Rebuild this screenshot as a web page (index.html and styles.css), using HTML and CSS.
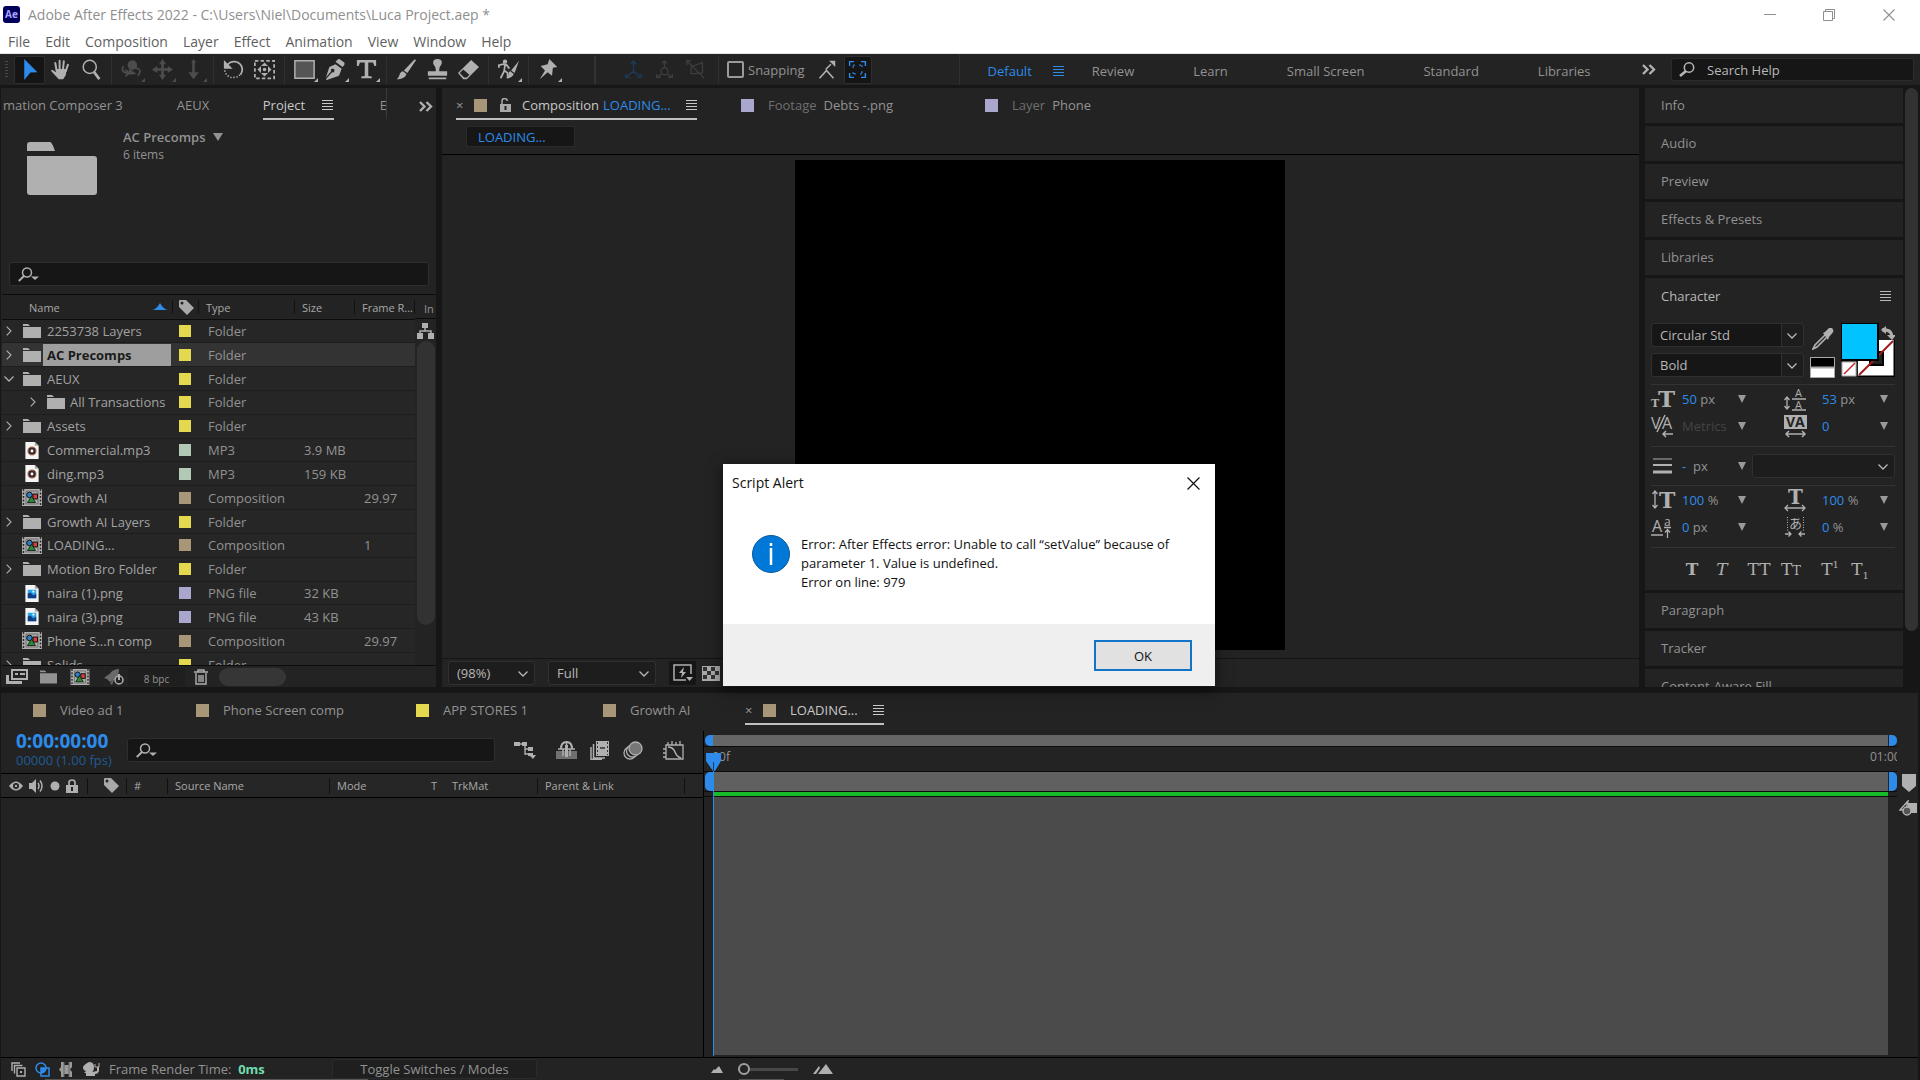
FILE: index.html
```
<!DOCTYPE html>
<html lang="en">
<head>
    <meta charset="UTF-8">
    <meta name="viewport" content="width=device-width, initial-scale=1.0">
    <title>Adobe After Effects 2022</title>
    <link rel="stylesheet" href="styles.css">
</head>
<body>
    <!-- Shared icons -->
    <svg class="sprite" aria-hidden="true">
        <symbol id="i-menu" viewBox="0 0 11 12"><path d="M0 1.500h11M0 4.500h11M0 7.500h11M0 10.500h11" stroke="currentColor"/></symbol>
        <symbol id="i-more" viewBox="0 0 14 11"><path d="M1 1l4.500 4.500L1 10M7.500 1L12 5.500 7.500 10" fill="none" stroke="currentColor" stroke-width="2.400"/></symbol>
        <symbol id="i-chevron" viewBox="0 0 10 6"><path d="M.5.500L5 5 9.500.500" fill="none" stroke="currentColor" stroke-width="1.300"/></symbol>
        <symbol id="i-right" viewBox="0 0 6 10"><path d="M.7.700L5 5 .7 9.300" fill="none" stroke="currentColor" stroke-width="1.100"/></symbol>
        <symbol id="i-down" viewBox="0 0 8 8"><path d="M0 0h8L4 8z" fill="currentColor"/></symbol>
        <symbol id="i-find" viewBox="0 0 22 15"><circle cx="9" cy="5.500" r="4.500" fill="none" stroke="currentColor" stroke-width="1.500"/><path d="M6 9L.8 14" stroke="currentColor" stroke-width="1.900"/><path d="M13 9.500h8L17 13z" fill="currentColor"/></symbol>
        <symbol id="i-find-plain" viewBox="0 0 16 15"><circle cx="10" cy="5.500" r="4.700" fill="none" stroke="currentColor" stroke-width="1.500"/><path d="M7 9L1 14" stroke="currentColor" stroke-width="2.500"/></symbol>
        <symbol id="i-folder" viewBox="0 0 18 14"><path d="M0 0h5l2 2H0zM0 3h18v11H0z" fill="currentColor"/></symbol>
        <symbol id="i-tag" viewBox="0 0 15 15"><path fill-rule="evenodd" d="M0 1Q0 0 1 0h6l8 8-7 7-8-8zM3 1.500a1.500 1.500 0 100 3 1.500 1.500 0 000-3z" fill="currentColor"/></symbol>
        <symbol id="i-comp" viewBox="0 0 20 17"><path d="M0 0h20v17H0z" fill="#b0b0b0"/><path d="M1.500 0v17M18.500 0v17" stroke="#2a2a2a" stroke-width="1.500" stroke-dasharray="2 1.500"/><path d="M4 2h12v13H4z" fill="#aaa" stroke="#555" stroke-width=".7"/><circle cx="7.500" cy="6" r="2.800" fill="#2c80c8" stroke="#111"/><path d="M11 5h4.500v5H11z" fill="#d64038" stroke="#111"/><path d="M9.500 7l4 6.500h-8z" fill="#278b35" stroke="#111" stroke-width=".8"/></symbol>
        <symbol id="i-mp3" viewBox="0 0 14 18"><path d="M0 0h10l4 4v14H0z" fill="#f5f5f5"/><path d="M10 0v4h4z" fill="#aaa"/><circle cx="7" cy="9.500" r="4.300" fill="#3a2b33" stroke="#c07857"/><circle cx="7" cy="9.500" r="1.500" fill="#fff"/></symbol>
        <symbol id="i-png" viewBox="0 0 14 18"><path d="M0 0h10l4 4v14H0z" fill="#f5f5f5"/><path d="M10 0v4h4z" fill="#aaa"/><path d="M2.500 5h9v9h-9z" fill="#2aa6e8"/><path d="M2.500 14V9l3-1 3 3 3-2v5z" fill="#103f86"/><circle cx="8.500" cy="7" r="1.200" fill="#fff"/></symbol>
        <symbol id="i-close" viewBox="0 0 12 12"><path d="M.5.500l11 11M11.500.500l-11 11" stroke="currentColor" stroke-width="1.100"/></symbol>
    </svg>

    <header class="titlebar">
        <span class="app-logo">Ae</span>
        <span class="app-title">Adobe After Effects 2022 - C:\Users\Niel\Documents\Luca Project.aep *</span>
        <div class="window-controls">
            <button aria-label="Minimize"><svg width="12" height="12"><path d="M0 5.500h12" stroke="currentColor"/></svg></button>
            <button aria-label="Restore"><svg width="12" height="12"><path d="M.5 2.500h9v9h-9zM2.500 2.500v-2h9v9h-2" fill="none" stroke="currentColor"/></svg></button>
            <button aria-label="Close"><svg width="12" height="12"><use href="#i-close"/></svg></button>
        </div>
    </header>

    <nav class="menubar">
        <a href="#">File</a><a href="#">Edit</a><a href="#">Composition</a><a href="#">Layer</a><a href="#">Effect</a><a href="#">Animation</a><a href="#">View</a><a href="#">Window</a><a href="#">Help</a>
    </nav>

    <div class="toolbar">
        <span class="grip"></span>
        <div class="tools">
            <button class="tool active" aria-label="Selection"><svg viewBox="0 0 24 24"><path d="M6 0l15 15-8 .5L6 24z" fill="currentColor"/></svg></button>
            <button class="tool" aria-label="Hand"><svg viewBox="0 0 24 24"><path d="M7.500 13L6 4.500M11 12V2M14.800 12l1-9.500M18 14l2.500-7.500" stroke="currentColor" stroke-width="2.300" stroke-linecap="round"/><path d="M6.500 11.500h12.500l-1 7-3 4.500h-5L1.500 14q-.5-2 1.500-1.500L7 15z" fill="currentColor"/></svg></button>
            <button class="tool" aria-label="Zoom"><svg viewBox="0 0 24 24"><circle cx="10" cy="9" r="7.500" fill="none" stroke="currentColor" stroke-width="1.700"/><path d="M15 15l6 8" stroke="currentColor" stroke-width="3"/></svg></button>
        </div>
        <div class="tools off">
            <button class="tool more" aria-label="Orbit camera"><svg viewBox="0 0 24 24"><path d="M8 16c-6 0-8-4-5-8M5 20l4-4-4-4M19 19c5-4 2-9-2-8" fill="none" stroke="currentColor" stroke-width="2"/><circle cx="13" cy="7" r="5.500" fill="currentColor"/><path d="M9 11l9 6-9 1z" fill="currentColor"/></svg></button>
            <button class="tool more" aria-label="Pan camera"><svg viewBox="0 0 24 24"><path d="M12 4v16M4 12h16" stroke="currentColor" stroke-width="3"/><path d="M12 0l4 6H8zM12 24l4-6H8zM0 12l6-4v8zM24 12l-6-4v8z" fill="currentColor"/></svg></button>
            <button class="tool more" aria-label="Dolly camera"><svg viewBox="0 0 24 24"><path d="M12 3v13" stroke="currentColor" stroke-width="3"/><path d="M12 23l6-8H6zM12 0l3 4H9z" fill="currentColor"/></svg></button>
        </div>
        <div class="tools">
            <button class="tool" aria-label="Rotation"><svg viewBox="0 0 24 24"><path d="M5 7c4-6 13-5 16 1 2 4 1 7-1 10" fill="none" stroke="currentColor" stroke-width="2"/><path d="M1 1v10h10z" fill="currentColor"/><path d="M2 13c1 6 6 9 11 8 3 0 5-1 7-4" fill="none" stroke="currentColor" stroke-width="1.800" stroke-dasharray="1.500 2"/></svg></button>
            <button class="tool" aria-label="Anchor point"><svg viewBox="0 0 24 24"><path d="M1 2h22v20H1z" fill="none" stroke="currentColor" stroke-width="2" stroke-dasharray="4 2.500"/><circle cx="12" cy="12" r="2" fill="currentColor"/><path d="M12 4l4 4H8zM12 20l4-4H8zM4 12l4-4v8zM20 12l-4-4v8z" fill="currentColor"/></svg></button>
        </div>
        <div class="tools">
            <button class="tool more" aria-label="Rectangle"><svg viewBox="0 0 24 24"><path d="M1 2h22v20H1z" fill="#555" stroke="currentColor" stroke-width="1.700"/></svg></button>
            <button class="tool more" aria-label="Pen"><svg viewBox="0 0 24 24"><path fill-rule="evenodd" d="M12 6l7 5-3 8-14 5L1 23l7-8a2 2 0 10-1-1l-6 7L5 9z" fill="currentColor"/><path d="M14 1q2-2 4 0l4 3q1 2-1 4l-1 1-8-6z" fill="currentColor"/></svg></button>
            <button class="tool more" aria-label="Type"><svg viewBox="0 0 24 24"><path d="M1 1h22v7h-2L19.500 4H14v15.500l4 .5v2H6v-2l4-.5V4H4.500L3 8H1z" fill="currentColor"/></svg></button>
        </div>
        <div class="tools">
            <button class="tool" aria-label="Brush"><svg viewBox="0 0 24 24"><path d="M23 1q-1-1-2.500 0L9 13l4 3zM8 14l4 3c-1 4-6 6-11 6 4-3 2-8 7-9z" fill="currentColor"/></svg></button>
            <button class="tool" aria-label="Clone stamp"><svg viewBox="0 0 24 24"><path d="M12 0c5 0 6 4 4 7-2 2-2 4-2 7h9v5H1v-5h9c0-3 0-5-2-7-2-3-1-7 4-7zM2 21h20v2H2z" fill="currentColor"/></svg></button>
            <button class="tool" aria-label="Eraser"><svg viewBox="0 0 24 24"><path d="M15 1l9 8-14 14H6l-6-7z" fill="currentColor"/><path d="M6 12l7 6-3 3H7l-5-5z" fill="#232323"/></svg></button>
        </div>
        <div class="tools">
            <button class="tool more" aria-label="Roto brush"><svg viewBox="0 0 24 24"><circle cx="8" cy="3" r="2.500" fill="currentColor"/><path d="M1 10V7l5-1 4 1 3 4M8 7l-1 7-4 8M7 13l4 3v6" fill="none" stroke="currentColor" stroke-width="2"/><path d="M24 2L15 13l4 3zM14 14l4 3c-1 3-4 5-8 5 3-2 1-7 4-8z" fill="currentColor"/></svg></button>
        </div>
        <div class="tools">
            <button class="tool more" aria-label="Puppet pin"><svg viewBox="0 0 24 24"><path d="M13 0l9 9-5 1-1 9-5-4-9 8 6-10-5-5 8-2z" fill="currentColor"/></svg></button>
        </div>
        <div class="axis-tools">
            <button class="tool axis-on" aria-label="Local axis"><svg viewBox="0 0 24 24"><path d="M12 3v11L3 21M12 14l9 7M9 6l3-4 3 4M3 17v4h5M21 17v4h-5" fill="none" stroke="currentColor" stroke-width="1.500"/></svg></button>
            <button class="tool" aria-label="World axis"><svg viewBox="0 0 24 24"><circle cx="12" cy="14" r="4" fill="none" stroke="currentColor" stroke-width="1.500"/><path d="M12 10V2M9 17l-6 4M15 17l6 4M9 5l3-3 3 3M3 17v4h5M21 17v4h-5" fill="none" stroke="currentColor" stroke-width="1.500"/></svg></button>
            <button class="tool" aria-label="View axis"><svg viewBox="0 0 24 24"><path d="M7 9l13-5v12L7 17zM2 2l20 20M2 7V2h5" fill="none" stroke="currentColor" stroke-width="1.500"/></svg></button>
        </div>
        <label class="snapping"><input type="checkbox">Snapping</label>
        <button class="tool snap-opt" aria-label="Snap to edges"><svg viewBox="0 0 24 24"><path d="M4 22l8-9 8 9M11 12l6-6" fill="none" stroke="currentColor" stroke-width="1.800"/><path d="M15 2h7v7z" fill="currentColor"/></svg></button>
        <button class="tool snap-opt active" aria-label="Snap to features"><svg viewBox="0 0 24 24"><path d="M3 8V3h5M16 3h5v5M21 16v5h-5M8 21H3v-5" fill="none" stroke="currentColor" stroke-width="1.600"/><path d="M7 10V7h3M14 7h3v3M17 14v3h-3M10 17H7v-3" fill="none" stroke="currentColor" stroke-width="1.500" stroke-dasharray="2 1"/></svg></button>
        <nav class="workspaces">
            <a href="#" class="current">Default <svg width="11" height="12"><use href="#i-menu"/></svg></a>
            <a href="#">Review</a>
            <a href="#">Learn</a>
            <a href="#">Small Screen</a>
            <a href="#">Standard</a>
            <a href="#">Libraries</a>
        </nav>
        <button class="overflow" aria-label="More workspaces"><svg width="14" height="11"><use href="#i-more"/></svg></button>
        <label class="help-search"><svg width="16" height="15"><use href="#i-find-plain"/></svg><input type="text" placeholder="Search Help" aria-label="Search Help"></label>
    </div>

    <main class="panels">
        <section class="panel project">
            <div class="tabs">
                <a href="#">mation Composer 3</a>
                <a href="#" class="aeux">AEUX</a>
                <a href="#" class="active">Project <svg width="11" height="12"><use href="#i-menu"/></svg></a>
                <a href="#" class="cut">E</a>
                <button class="overflow" aria-label="More panels"><svg width="14" height="11"><use href="#i-more"/></svg></button>
            </div>
            <div class="item-info">
                <svg class="big-folder" width="70" height="53" viewBox="0 0 70 53"><path d="M0 3q0-3 3-3h20q2 0 5 9H0zM0 14h67q3 0 3 3v33q0 3-3 3H3q-3 0-3-3z" fill="#b0b0b0"/></svg>
                <div>
                    <strong>AC Precomps <svg width="10" height="8" viewBox="0 0 8 8" preserveAspectRatio="none"><use href="#i-down"/></svg></strong>
                    <p>6 items</p>
                </div>
            </div>
            <label class="search"><svg width="22" height="15"><use href="#i-find"/></svg><input type="text" aria-label="Search project"></label>
            <div class="list">
                <table>
                    <thead>
                        <tr><th class="c-name">Name <svg width="16" height="7"><path d="M0 7q4 0 8-7 4 7 8 7z" fill="#2d8ceb"/></svg></th><th class="c-label"><svg width="15" height="15"><use href="#i-tag"/></svg></th><th class="c-type">Type</th><th class="c-size">Size</th><th class="c-rate">Frame R...</th></tr>
                    </thead>
                    <tbody>
                        <tr><td><div class="item"><svg class="twist"><use href="#i-right"/></svg><svg class="kind"><use href="#i-folder"/></svg>2253738 Layers</div></td><td><i class="label yellow"></i></td><td>Folder</td><td></td><td></td></tr>
                        <tr class="selected"><td><div class="item"><svg class="twist"><use href="#i-right"/></svg><svg class="kind"><use href="#i-folder"/></svg><b>AC Precomps</b></div></td><td><i class="label yellow"></i></td><td>Folder</td><td></td><td></td></tr>
                        <tr><td><div class="item"><svg class="twist"><use href="#i-chevron"/></svg><svg class="kind"><use href="#i-folder"/></svg>AEUX</div></td><td><i class="label yellow"></i></td><td>Folder</td><td></td><td></td></tr>
                        <tr><td><div class="item nested"><svg class="twist"><use href="#i-right"/></svg><svg class="kind"><use href="#i-folder"/></svg>All Transactions</div></td><td><i class="label yellow"></i></td><td>Folder</td><td></td><td></td></tr>
                        <tr><td><div class="item"><svg class="twist"><use href="#i-right"/></svg><svg class="kind"><use href="#i-folder"/></svg>Assets</div></td><td><i class="label yellow"></i></td><td>Folder</td><td></td><td></td></tr>
                        <tr><td><div class="item file"><svg class="kind"><use href="#i-mp3"/></svg>Commercial.mp3</div></td><td><i class="label mint"></i></td><td>MP3</td><td>3.9 MB</td><td></td></tr>
                        <tr><td><div class="item file"><svg class="kind"><use href="#i-mp3"/></svg>ding.mp3</div></td><td><i class="label mint"></i></td><td>MP3</td><td>159 KB</td><td></td></tr>
                        <tr><td><div class="item file"><svg class="kind"><use href="#i-comp"/></svg>Growth AI</div></td><td><i class="label sand"></i></td><td>Composition</td><td></td><td>29.97</td></tr>
                        <tr><td><div class="item"><svg class="twist"><use href="#i-right"/></svg><svg class="kind"><use href="#i-folder"/></svg>Growth AI Layers</div></td><td><i class="label yellow"></i></td><td>Folder</td><td></td><td></td></tr>
                        <tr><td><div class="item file"><svg class="kind"><use href="#i-comp"/></svg>LOADING...</div></td><td><i class="label sand"></i></td><td>Composition</td><td></td><td>1</td></tr>
                        <tr><td><div class="item"><svg class="twist"><use href="#i-right"/></svg><svg class="kind"><use href="#i-folder"/></svg>Motion Bro Folder</div></td><td><i class="label yellow"></i></td><td>Folder</td><td></td><td></td></tr>
                        <tr><td><div class="item file"><svg class="kind"><use href="#i-png"/></svg>naira (1).png</div></td><td><i class="label lavender"></i></td><td>PNG file</td><td>32 KB</td><td></td></tr>
                        <tr><td><div class="item file"><svg class="kind"><use href="#i-png"/></svg>naira (3).png</div></td><td><i class="label lavender"></i></td><td>PNG file</td><td>43 KB</td><td></td></tr>
                        <tr><td><div class="item file"><svg class="kind"><use href="#i-comp"/></svg>Phone S...n comp</div></td><td><i class="label sand"></i></td><td>Composition</td><td></td><td>29.97</td></tr>
                        <tr><td><div class="item"><svg class="twist"><use href="#i-right"/></svg><svg class="kind"><use href="#i-folder"/></svg>Solids</div></td><td><i class="label yellow"></i></td><td>Folder</td><td></td><td></td></tr>
                    </tbody>
                </table>
                <div class="list-side">
                    <span class="side-head">In</span>
                    <svg width="17" height="16" viewBox="0 0 17 16"><path d="M5 0h6v5H5zM0 10h6v6H0zM11 10h6v6h-6z" fill="#b0b0b0"/><path d="M8 5v3M3 11V8h11v3" fill="none" stroke="#b0b0b0" stroke-width="1.500"/></svg>
                    <div class="scrollbar"></div>
                </div>
            </div>
            <div class="project-foot">
                <svg width="22" height="15" viewBox="0 0 22 15"><path d="M6 1h15v9H6z" fill="none" stroke="#b0b0b0" stroke-width="2"/><path d="M9 5h3M14 5h5" stroke="#b0b0b0" stroke-width="2"/><path d="M0 6h3v6h13v3H0z" fill="#b0b0b0"/></svg>
                <svg width="17" height="14"><use href="#i-folder"/></svg>
                <svg width="22" height="16"><use href="#i-comp"/></svg>
                <svg width="22" height="16" viewBox="0 0 22 16"><path d="M16 0C10 0 6 4 4 10l3 3c6-2 9-7 9-13zM1 9l5-4-2 5zM7 14l4-3-2 5z" fill="#6a6a6a"/><circle cx="16" cy="11" r="4" fill="#232323" stroke="#b0b0b0" stroke-width="1.500"/><path d="M16 5v6" stroke="#b0b0b0" stroke-width="2"/></svg>
                <button class="bpc">8 bpc</button>
                <svg width="14" height="16" viewBox="0 0 14 16"><path d="M0 3h14M4 3V1h6v2M2 4v11h10V4M5 6v7M7 6v7M9 6v7" fill="none" stroke="#b0b0b0" stroke-width="1.400"/></svg>
                <div class="h-scroll"></div>
            </div>
        </section>

        <section class="panel viewer">
            <div class="tabs">
                <a href="#" class="active comp-tab"><span class="x">×</span><i class="swatch sand"></i><svg class="lock" width="11" height="14" viewBox="0 0 11 14"><path d="M2 6V3q0-2.500 2.500-2.500T7.500 3" fill="none" stroke="#aaa" stroke-width="1.500"/><path d="M0 6h11v8H0z" fill="#aaa"/><path d="M5.500 8v4" stroke="#232323" stroke-width="2"/></svg>Composition <em>LOADING...</em><svg width="11" height="12"><use href="#i-menu"/></svg></a>
                <a href="#" class="footage-tab"><i class="swatch lavender"></i><span>Footage</span> Debts -.png</a>
                <a href="#" class="layer-tab"><i class="swatch lavender"></i><span>Layer</span> Phone</a>
            </div>
            <div class="crumbs"><button>LOADING...</button></div>
            <div class="stage"><div class="canvas"></div></div>
            <div class="viewer-foot">
                <div class="select zoom-select"><select aria-label="Magnification"><option>(98%)</option></select><svg width="10" height="6"><use href="#i-chevron"/></svg></div>
                <div class="select res-select"><select aria-label="Resolution"><option>Full</option></select><svg width="10" height="6"><use href="#i-chevron"/></svg></div>
                <button class="fast" aria-label="Fast previews"><svg width="20" height="18" viewBox="0 0 20 18"><path d="M18 10V1H1v15h12" fill="none" stroke="#b0b0b0" stroke-width="1.500"/><path d="M11 3L6 9h3l-1 5 5-6h-3zM13 13h7l-3.500 4z" fill="#b0b0b0"/></svg></button>
                <svg width="18" height="15" viewBox="0 0 18 15"><path d="M0 0h18v15H0z" fill="#aaa"/><path d="M1 3h16M1 11h16" stroke="#333" stroke-width="4" stroke-dasharray="4 4"/><path d="M5 7h12" stroke="#333" stroke-width="4" stroke-dasharray="4 4"/></svg>
            </div>
        </section>

        <aside class="sidebar">
            <div class="stack">
                <h2>Info</h2>
                <h2>Audio</h2>
                <h2>Preview</h2>
                <h2>Effects &amp; Presets</h2>
                <h2>Libraries</h2>
                <div class="character">
                    <h2>Character <svg width="11" height="12"><use href="#i-menu"/></svg></h2>
                    <div class="font-row">
                        <div class="font-selects">
                            <div class="select split"><select aria-label="Font"><option>Circular Std</option></select><svg width="10" height="6"><use href="#i-chevron"/></svg></div>
                            <div class="select split"><select aria-label="Style"><option>Bold</option></select><svg width="10" height="6"><use href="#i-chevron"/></svg></div>
                        </div>
                        <div class="picker">
                            <svg width="22" height="22" viewBox="0 0 22 22"><path d="M13 7L3 17l-2 4 4-2L15 9" fill="none" stroke="#b0b0b0" stroke-width="1.700"/><path d="M11 5l2-1 4-4q3-1 4 1.500t-1 4L17 9l-1 3z" fill="#b0b0b0"/></svg>
                            <svg width="25" height="21"><path d="M.5.500h24v20H.5z" fill="#fff" stroke="#aaa"/><path d="M1 1h23v9H1z" fill="#000"/><path d="M1 10.500h23" stroke="#aaa" stroke-width="2"/></svg>
                        </div>
                        <svg class="colors" width="54" height="54" viewBox="0 0 54 54"><path d="M17 17h36v36H17z" fill="#fff"/><path d="M53.500 17v36.500H17" fill="none" stroke="#000" stroke-width="2"/><path d="M29 29h13v13H29z" fill="#222" stroke="#000" stroke-width="2"/><path d="M18 52l34-34" stroke="#a11a1a" stroke-width="2"/><path d="M0 0h38v38H0z" fill="#000"/><path d="M1 1h35v35H1z" fill="#00c3ff"/><path d="M1 39h14v14H1z" fill="#fff" stroke="#aaa"/><path d="M3 51l11-11" stroke="#c22" stroke-width="1.500"/><path d="M41 7q9-1 10 6" fill="none" stroke="#b0b0b0" stroke-width="3"/><path d="M45 3v8l-5-4zM46 12h9l-4 5z" fill="#b0b0b0"/></svg>
                    </div>
                    <div class="fields">
                        <svg class="ch" viewBox="0 0 24 22"><text x="0" y="19" class="g-serif" font-size="11">T</text><text x="7" y="19" class="g-serif" font-size="23">T</text></svg><span class="val"><b>50</b> px</span><svg class="arr"><use href="#i-down"/></svg>
                        <svg class="ch" viewBox="0 0 24 22"><path d="M8 11h14M8 22h14M3 10v10M.500 12L3 9l2.500 3M.500 18L3 21l2.500-3" fill="none" stroke="#b0b0b0" stroke-width="1.300"/><text x="11" y="9" class="g-sans" font-size="11">A</text><text x="11" y="21" class="g-sans" font-size="11">A</text></svg><span class="val"><b>53</b> px</span><svg class="arr"><use href="#i-down"/></svg>
                        <svg class="ch" viewBox="0 0 24 22"><text x="0" y="14" class="g-sans" font-size="16">V</text><text x="11" y="14" class="g-sans" font-size="16">A</text><path d="M6 17L14 0M22 19H12M15 16l-3 3 3 3" fill="none" stroke="#b0b0b0" stroke-width="1.500"/></svg><span class="val dim">Metrics</span><svg class="arr"><use href="#i-down"/></svg>
                        <svg class="ch" viewBox="0 0 24 22"><path d="M0 0h23v14H0z" fill="#b0b0b0"/><text x="2" y="12" font-family="Open Sans, sans-serif" font-size="14" font-weight="700" fill="#232323">VA</text><path d="M2 19h19M5 16l-3 3 3 3M18 16l3 3-3 3" fill="none" stroke="#b0b0b0" stroke-width="1.500"/></svg><span class="val"><b>0</b></span><svg class="arr"><use href="#i-down"/></svg>
                    </div>
                    <div class="stroke-row">
                        <svg class="ch" viewBox="0 0 24 22"><path d="M2 4h19" stroke="#b0b0b0"/><path d="M2 10h19" stroke="#b0b0b0" stroke-width="2"/><path d="M2 17h19" stroke="#b0b0b0" stroke-width="3"/></svg><span class="val"><b>-</b>&nbsp; px</span><svg class="arr"><use href="#i-down"/></svg>
                        <div class="select"><select aria-label="Stroke order"><option></option></select><svg width="10" height="6"><use href="#i-chevron"/></svg></div>
                    </div>
                    <div class="fields">
                        <svg class="ch" viewBox="0 0 24 22"><text x="8" y="19" class="g-serif" font-size="22">T</text><path d="M4 3v15M1.500 5L4 2l2.500 3M1.500 16L4 19l2.500-3" fill="none" stroke="#b0b0b0" stroke-width="1.300"/></svg><span class="val"><b>100</b> %</span><svg class="arr"><use href="#i-down"/></svg>
                        <svg class="ch" viewBox="0 0 24 22"><text x="4" y="15" class="g-serif" font-size="20">T</text><path d="M1 19h20M4 16l-3 3 3 3M18 16l3 3-3 3" fill="none" stroke="#b0b0b0" stroke-width="1.300"/></svg><span class="val"><b>100</b> %</span><svg class="arr"><use href="#i-down"/></svg>
                        <svg class="ch" viewBox="0 0 24 22"><text x="1" y="16" class="g-sans" font-size="16">A</text><text x="13" y="10" class="g-sans" font-size="12">a</text><path d="M0 19h12M13 11.500h7M16.500 22v-8M14 16.500l2.500-3 2.500 3" fill="none" stroke="#b0b0b0" stroke-width="1.300"/></svg><span class="val"><b>0</b> px</span><svg class="arr"><use href="#i-down"/></svg>
                        <svg class="ch" viewBox="0 0 24 22"><text x="5" y="12" class="g-cjk" font-size="13">あ</text><path d="M3.500 1v14M19.500 1v14" stroke="#b0b0b0" stroke-dasharray="1 1.500"/><path d="M1 18h6M4.500 15.500L7 18l-2.500 2.500M21 18h-6M17.500 15.500L15 18l2.500 2.500" fill="none" stroke="#b0b0b0" stroke-width="1.300"/></svg><span class="val"><b>0</b> %</span><svg class="arr"><use href="#i-down"/></svg>
                    </div>
                    <div class="faux">
                        <button class="bold" aria-label="Faux bold">T</button><button class="italic" aria-label="Faux italic">T</button><button class="wide" aria-label="All caps">TT</button><button class="wide" aria-label="Small caps">T<small>T</small></button><button aria-label="Superscript">T<sup>1</sup></button><button aria-label="Subscript">T<sub>1</sub></button>
                    </div>
                </div>
                <h2>Paragraph</h2>
                <h2>Tracker</h2>
                <h2>Content-Aware Fill</h2>
            </div>
            <div class="side-scroll"></div>
        </aside>
    </main>

    <section class="timeline">
        <div class="tabs comps">
            <a href="#"><i class="swatch sand"></i>Video ad 1</a>
            <a href="#"><i class="swatch sand"></i>Phone Screen comp</a>
            <a href="#"><i class="swatch yellow"></i>APP STORES 1</a>
            <a href="#"><i class="swatch sand"></i>Growth AI</a>
            <a href="#" class="active"><span class="x">×</span><i class="swatch sand"></i>LOADING...<svg width="11" height="12"><use href="#i-menu"/></svg></a>
        </div>
        <div class="time-body">
            <div class="layers">
                <div class="time-head">
                    <div class="timecode"><strong>0:00:00:00</strong><span>00000 (1.00 fps)</span></div>
                    <label class="search"><svg width="22" height="15"><use href="#i-find"/></svg><input type="text" aria-label="Search layers"></label>
                    <div class="switches">
                        <svg width="22" height="18" viewBox="0 0 22 18"><path d="M0 1h6v4H0zM8 1h5v4H8zM14 6h5v4h-5zM14 12h5v3h-5zM15 14h7l-3 4z" fill="#b0b0b0"/><path d="M5 3h6v10h4M11 8h4" fill="none" stroke="#b0b0b0" stroke-width="1.400"/></svg>
                        <svg width="21" height="18" viewBox="0 0 21 18"><path d="M0 10h21v8H0z" fill="#707070"/><path d="M2 8h17M10.500 0v15M7 15V8h7v7" fill="none" stroke="#b0b0b0" stroke-width="1.500"/><path d="M9 4h3v12H9z" fill="#b0b0b0"/><path d="M5 8q0-7 5.500-7T16 8" fill="none" stroke="#b0b0b0" stroke-width="2"/></svg>
                        <svg width="20" height="19" viewBox="0 0 20 19"><path d="M6 0h13v15H6z" fill="#b0b0b0"/><path d="M7.500 1v13M17.500 1v13" stroke="#333" stroke-dasharray="2 2"/><path d="M10 7h5" stroke="#333" stroke-width="1.500"/><path d="M3.500 3v14H15M1 6v12.500h11" fill="none" stroke="#b0b0b0" stroke-width="1.500"/></svg>
                        <svg width="20" height="19" viewBox="0 0 20 19"><g stroke="#b0b0b0" stroke-width="1.300"><circle cx="7" cy="12" r="6" fill="#232323"/><circle cx="9.500" cy="10" r="6" fill="#232323"/><circle cx="12.500" cy="7.500" r="6.500" fill="#777"/></g></svg>
                        <svg width="21" height="19" viewBox="0 0 21 19"><path d="M3 4h17v14H3zM5 4V1M9 4V0M13 4V1M17 4V0M3 8H0M3 12H0M3 16H0" fill="none" stroke="#b0b0b0" stroke-width="1.300"/><path d="M5 6q5 0 7 5t6 6" fill="none" stroke="#b0b0b0" stroke-width="1.500"/></svg>
                    </div>
                </div>
                <div class="layer-cols">
                    <span class="av">
                        <svg width="14" height="10" viewBox="0 0 14 10"><path d="M0 5q7-9 14 0-7 9-14 0z" fill="#b0b0b0"/><circle cx="7" cy="5" r="3" fill="#232323"/><circle cx="7" cy="5" r="1.200" fill="#b0b0b0"/></svg>
                        <svg width="15" height="14" viewBox="0 0 15 14"><path d="M0 4h3l4-4v14l-4-4H0z" fill="#b0b0b0"/><path d="M9 4q2 3 0 6M11 1.500q4 5.500 0 11" fill="none" stroke="#b0b0b0" stroke-width="1.500"/></svg>
                        <svg width="10" height="10"><circle cx="5" cy="5" r="4.500" fill="#b0b0b0"/></svg>
                        <svg width="12" height="14" viewBox="0 0 12 14"><path d="M3 6V3.500Q3 1 6 1t3 2.500V6" fill="none" stroke="#b0b0b0" stroke-width="1.700"/><path d="M0 6h12v8H0z" fill="#b0b0b0"/><path d="M6 8v4" stroke="#232323" stroke-width="2"/></svg>
                    </span>
                    <span class="tag"><svg width="15" height="15"><use href="#i-tag"/></svg></span>
                    <span class="num">#</span>
                    <span class="source">Source Name</span>
                    <span class="mode">Mode</span>
                    <span class="t">T</span>
                    <span class="trk">TrkMat</span>
                    <span class="parent">Parent &amp; Link</span>
                </div>
            </div>
            <div class="graph">
                <div class="nav-range"><i class="cap-l"></i><i class="bar"></i><i class="cap-r"></i></div>
                <div class="ruler"><span>:00f</span><span>01:00</span></div>
                <div class="work-area"><i class="cap-l"></i><i class="bar"></i><i class="cap-r"></i></div>
                <div class="cached"><i></i></div>
                <div class="tracks"></div>
                <div class="playhead"><svg width="15" height="18" viewBox="0 0 15 18"><path d="M0 0h15v8l-6 10H7L0 8z" fill="#2d8ceb"/><path d="M7.500 18V9" stroke="#143e66"/></svg></div>
            </div>
            <div class="gutter">
                <svg width="14" height="18"><path d="M0 0h14v12l-7 6-7-6z" fill="#b0b0b0"/></svg>
                <svg width="18" height="16" viewBox="0 0 18 16"><path d="M9 1L1 10h6z" fill="none" stroke="#b0b0b0" stroke-width="1.500"/><path d="M9 3h9v10H9z" fill="#b0b0b0"/><circle cx="8" cy="11" r="4" fill="#555" stroke="#b0b0b0" stroke-width="1.500"/></svg>
            </div>
        </div>
        <footer class="status">
            <div class="status-left">
                <svg width="15" height="15" viewBox="0 0 15 15"><path d="M1 9V1h8M3.500 11.500V3.500h8M6 6h8v8H6z" fill="none" stroke="#b0b0b0" stroke-width="1.400"/><path d="M9 9h2v2H9z" fill="#b0b0b0"/></svg>
                <svg width="15" height="15" viewBox="0 0 15 15"><circle cx="6" cy="6" r="5" fill="none" stroke="#2d8ceb" stroke-width="1.500"/><path d="M6 6h8v8H6z" fill="none" stroke="#2d8ceb" stroke-width="1.500"/><path d="M6 6h5q0 5-5 5z" fill="#2d8ceb"/></svg>
                <svg width="15" height="15" viewBox="0 0 15 15"><path d="M2 0h3v3h5V0h3v5l-2 2.500 2 2.500v5h-3v-3H5v3H2v-5l-2-2.500L2 5z" fill="#9a9a9a"/><path d="M5 0v15M10 0v15" stroke="#666"/></svg>
                <svg width="17" height="14" viewBox="0 0 17 14"><path d="M6 0q5 0 5 5 0 4-2 5l5-1V5h2v4q-1 3-4 3v2H3v-3H1l2-2Q0 8 0 5.500T6 0z" fill="#b0b0b0"/><path d="M12 2v3h4V1" fill="none" stroke="#b0b0b0"/></svg>
                <span>Frame Render Time: &nbsp;<b>0ms</b></span>
            </div>
            <button class="toggle">Toggle Switches / Modes</button>
            <div class="zoomer">
                <svg width="12" height="7"><path d="M0 7l3-4 1 1 4-4 4 7z" fill="#b0b0b0"/></svg>
                <input type="range" min="0" max="100" value="0" aria-label="Timeline zoom">
                <svg width="20" height="10"><path d="M0 10l6-8 1 2-4 6zM5 10l8-10 7 10z" fill="#b0b0b0"/></svg>
            </div>
        </footer>
    </section>

    <div class="alert" role="dialog" aria-labelledby="alert-title">
        <div class="alert-head"><span id="alert-title">Script Alert</span><button aria-label="Close"><svg width="13" height="13"><use href="#i-close"/></svg></button></div>
        <div class="alert-body">
            <svg width="38" height="38"><circle cx="19" cy="19" r="18.500" fill="#0078d7" stroke="#085a9e"/><path d="M19 8v3M19 13v17" stroke="#fff" stroke-width="2.500"/></svg>
            <p>Error: After Effects error: Unable to call “setValue” because of<br>parameter 1. Value is undefined.<br>Error on line: 979</p>
        </div>
        <div class="alert-foot"><button>OK</button></div>
    </div>
</body>
</html>
```
FILE: styles.css
```
* {
    margin: 0;
    padding: 0;
    box-sizing: border-box;
}

:root {
    --panel: #232323;
    --gap: #161616;
    --line: #303030;
    --text: #929292;
    --bright: #b8b8b8;
    --blue: #2d8ceb;
}

body {
    font-family: 'Open Sans', sans-serif;
    font-size: 13px;
    line-height: 18px;
    background: var(--gap);
    color: var(--text);
    min-height: 100vh;
    display: flex;
    flex-direction: column;
    position: relative;
}

a {
    color: inherit;
    text-decoration: none;
}

button, input, select {
    font: inherit;
    color: inherit;
    background: none;
    border: none;
    outline: none;
}

svg {
    display: block;
    flex: none;
}

.sprite {
    position: absolute;
    width: 0;
    height: 0;
}

/* Title and menu */
.titlebar {
    display: flex;
    align-items: center;
    height: 29px;
    padding-left: 3px;
    background: #fff;
    color: #8f8f8f;
    font-size: 14px;
}

.app-logo {
    width: 17px;
    height: 17px;
    margin-right: 8px;
    border-radius: 3px;
    background: #00005b;
    color: #a9a2ff;
    font-size: 10px;
    font-weight: 700;
    line-height: 16px;
    text-align: center;
}

.window-controls {
    display: flex;
    margin-left: auto;
}

.window-controls button {
    display: flex;
    justify-content: center;
    width: 59px;
}

.window-controls button:last-child {
    width: 62px;
}

.menubar {
    display: flex;
    gap: 15px;
    height: 25px;
    padding: 4px 8px 0;
    background: #fff;
    border-bottom: 1px solid #e6e6e6;
    color: #5f5f5f;
    font-size: 14px;
}

/* Toolbar */
.toolbar {
    display: flex;
    align-items: center;
    height: 31px;
    padding: 0 6px 0 5px;
    background: var(--panel);
}

.grip {
    width: 3px;
    height: 18px;
    margin-right: 6px;
    background: repeating-linear-gradient(#4a4a4a 0 1px, transparent 1px 3px);
}

.tools {
    display: flex;
    color: #b0b0b0;
}

.tools + .tools {
    margin-left: 4px;
    padding-left: 4px;
    border-left: 1px solid var(--line);
}

.tools.off {
    color: #4c4c4c;
}

.tool {
    position: relative;
    display: flex;
    align-items: center;
    justify-content: center;
    width: 31px;
    height: 28px;
}

.tool svg {
    width: 21px;
    height: 21px;
}

.tool.active {
    background: #151515;
    border: 1px solid #2e2e2e;
    border-radius: 2px;
    color: var(--blue);
}

.tool.more::after {
    content: '';
    position: absolute;
    right: 2px;
    bottom: 2px;
    border: 2px solid transparent;
    border-right-color: currentColor;
    border-bottom-color: currentColor;
}

.axis-tools {
    display: flex;
    margin-left: 30px;
    padding-left: 22px;
    padding-right: 7px;
    border-left: 2px solid #323232;
    border-right: 1px solid var(--line);
    color: #3d3d3d;
}

.axis-on {
    color: #1b3a58;
}

.snapping {
    display: flex;
    align-items: center;
    gap: 4px;
    margin-left: 8px;
    margin-right: 8px;
}

.snapping input {
    appearance: none;
    width: 17px;
    height: 17px;
    border: 2px solid #9a9a9a;
    border-radius: 2px;
}

.snap-opt {
    width: 28px;
    color: #b0b0b0;
    margin-right: 3px;
}

.workspaces {
    display: flex;
    flex: 1;
    gap: 59px;
    height: 31px;
    align-items: center;
    margin-left: 84px;
    padding-left: 28px;
    border-left: 1px solid var(--line);
}

.workspaces a {
    display: flex;
    align-items: center;
    padding-top: 2px;
    white-space: nowrap;
}

.workspaces .current {
    gap: 21px;
    margin-right: -31px;
    color: var(--blue);
}

.overflow {
    color: #b0b0b0;
}

.help-search {
    display: flex;
    align-items: center;
    gap: 12px;
    width: 243px;
    height: 23px;
    margin-left: 15px;
    padding-left: 7px;
    background: var(--gap);
    border: 1px solid #2c2c2c;
    border-radius: 3px;
    color: var(--bright);
}

.help-search input {
    width: 180px;
    height: 20px;
}

.help-search input::placeholder {
    color: var(--bright);
}

/* Panels */
.panels {
    display: flex;
    gap: 6px;
    height: 602px;
    padding: 3px 2px 0 1px;
    overflow: hidden;
}

.panel {
    background: var(--panel);
    display: flex;
    flex-direction: column;
}

.tabs {
    display: flex;
    height: 32px;
}

.tabs a {
    display: flex;
    align-items: center;
    height: 32px;
    padding-top: 4px;
    border-bottom: 2px solid transparent;
    white-space: nowrap;
}

.tabs a.active {
    border-bottom-color: #c0c0c0;
    color: #c8c8c8;
}

.tabs .x {
    width: 18px;
    color: #999;
}

.swatch {
    width: 13px;
    height: 13px;
    margin-right: 14px;
}

.sand { background: #a89678; }
.yellow { background: #e3d84e; }
.mint { background: #b2c9b5; }
.lavender { background: #aaa7ce; }

.project {
    width: 435px;
}

.project .tabs {
    padding-left: 2px;
}

.project .tabs a.aeux {
    width: 86px;
    margin-left: 54px;
}

.project .tabs a.active {
    gap: 17px;
    width: 71px;
}

.project .tabs a.cut {
    width: 7px;
    margin-left: 46px;
    overflow: hidden;
    border-right: 1px solid #3a3a3a;
}

.project .tabs .overflow {
    margin-left: auto;
    padding: 4px 3px 0 0;
}

.item-info {
    display: flex;
    gap: 26px;
    height: 142px;
    padding: 8px 26px;
}

.item-info .big-folder {
    margin-top: 14px;
}

.item-info strong {
    display: flex;
    align-items: center;
    gap: 7px;
    font-weight: 600;
}

.item-info p {
    font-size: 12px;
    line-height: 17px;
}

.search {
    display: flex;
    align-items: center;
    height: 24px;
    background: var(--gap);
    border: 1px solid #2e2e2e;
    border-radius: 3px;
    color: #b0b0b0;
}

.search input {
    width: 100%;
    padding-left: 6px;
}

.project .search {
    margin: 0 7px 8px 8px;
    padding-left: 8px;
}

.list {
    display: flex;
    height: 372px;
    margin-left: 1px;
    overflow: hidden;
    border-top: 1px solid #0c0c0c;
    border-bottom: 1px solid #0c0c0c;
}

.list table {
    width: 413px;
    height: 382px;
    border-collapse: collapse;
    table-layout: fixed;
}

.list th {
    height: 24px;
    border-bottom: 1px solid #0c0c0c;
    font-size: 11px;
    font-weight: 400;
    text-align: left;
    color: #a8a8a8;
    padding: 3px 0 0 7px;
    white-space: nowrap;
    background: linear-gradient(#111, #111) right center / 1px 14px no-repeat;
}

.list th svg {
    display: inline-block;
    vertical-align: middle;
}

.list .c-name {
    width: 171px;
    padding-left: 27px;
}

.list .c-name svg {
    float: right;
    margin: 4px 5px 0 0;
}

.list .c-label {
    width: 26px;
    padding: 0 0 0 6px;
}

.list .c-type { width: 96px; }
.list .c-size { width: 60px; }
.list .c-rate { width: 60px; }

.list td {
    border-bottom: 1px solid #1d1d1d;
    padding: 0 0 0 9px;
    white-space: nowrap;
    background: #262626;
}

.list td:first-child {
    padding-left: 2px;
}

.list td:nth-child(2) {
    padding-left: 6px;
}

.item {
    display: flex;
    align-items: center;
    height: 22px;
    overflow: hidden;
    color: #a2a2a2;
}

.item .twist {
    width: 10px;
    height: 10px;
    margin-right: 9px;
    color: #b0b0b0;
}

.item .kind {
    width: 18px;
    height: 14px;
    margin-right: 6px;
    color: #b0b0b0;
}

.item.nested {
    padding-left: 24px;
}

.item.nested .kind {
    margin-right: 5px;
}

.item.file .kind {
    width: 20px;
    height: 17px;
    margin-left: 18px;
    margin-right: 5px;
}

.item b {
    height: 22px;
    width: 128px;
    margin-left: -4px;
    padding: 2px 4px;
    background: #9e9e9e;
    color: #1a1a1a;
}

.list .selected td {
    background: #333;
}

.label {
    display: block;
    width: 12px;
    height: 12px;
}

.list-side {
    display: flex;
    flex-direction: column;
    align-items: center;
    flex: 1;
}

.side-head {
    align-self: stretch;
    height: 24px;
    margin-bottom: 4px;
    padding: 5px 0 0 9px;
    border-bottom: 1px solid #0c0c0c;
    font-size: 11px;
    line-height: 17px;
}

.scrollbar {
    width: 18px;
    height: 284px;
    margin-top: 2px;
    border-radius: 9px;
    background: #323232;
}

.project-foot {
    display: flex;
    align-items: center;
    gap: 12px;
    height: 21px;
    padding-left: 5px;
}

.bpc {
    width: 57px;
    height: 18px;
    margin: 0 -3px 0 -9px;
    background: #1f1f1f;
    font-size: 10px;
    line-height: 22px;
}

.h-scroll {
    width: 67px;
    height: 18px;
    margin-left: -1px;
    border-radius: 9px;
    background: #363636;
}

/* Composition viewer */
.viewer {
    flex: 1;
    min-width: 0;
}

.viewer .tabs {
    padding-left: 14px;
}

.viewer .tabs .lock {
    margin: 0 11px 0 -1px;
}

.comp-tab {
    width: 241px;
}

.comp-tab em {
    margin-left: 4px;
    margin-right: auto;
    font-style: normal;
    color: var(--blue);
}

.footage-tab {
    width: 244px;
    margin-left: 44px;
}

.viewer .tabs span:not(.x) {
    margin-right: 7px;
    color: #6f6f6f;
}

.crumbs {
    height: 35px;
    padding: 6px 24px;
    border-bottom: 1px solid #000;
}

.crumbs button {
    width: 109px;
    height: 21px;
    padding-left: 11px;
    background: var(--gap);
    border: 1px solid #2a2a2a;
    color: var(--blue);
    text-align: left;
}

.stage {
    flex: 1;
    display: flex;
    justify-content: center;
    padding: 5px 2px 0 0;
}

.canvas {
    width: 490px;
    height: 490px;
    background: #000;
}

.viewer-foot {
    display: flex;
    align-items: center;
    height: 29px;
    padding-left: 6px;
    border-top: 1px solid #141414;
    gap: 6px;
}

.select {
    position: relative;
    height: 24px;
    border: 1px solid #303030;
    border-radius: 3px;
    background: #1d1d1d;
    color: var(--bright);
}

.select select {
    appearance: none;
    width: 100%;
    height: 22px;
    padding-left: 8px;
}

.select svg {
    position: absolute;
    right: 6px;
    top: 9px;
    pointer-events: none;
}

.zoom-select { width: 87px; }

.res-select {
    width: 108px;
    margin-left: 7px;
}

.fast {
    display: flex;
    align-items: center;
    justify-content: center;
    width: 27px;
    height: 24px;
    margin-left: 7px;
    background: var(--gap);
}

/* Right column */
.sidebar {
    display: flex;
    gap: 2px;
    width: 273px;
}

.stack {
    flex: 1;
    display: flex;
    flex-direction: column;
    gap: 3px;
}

.stack h2 {
    flex: none;
    height: 35px;
    padding: 8px 16px;
    background: var(--panel);
    font-size: 13px;
    font-weight: 400;
}

.side-scroll {
    width: 13px;
    height: 543px;
    border-radius: 7px;
    background: #323232;
}

.character {
    flex: none;
    height: 312px;
    background: var(--panel);
}

.character h2 {
    display: flex;
    align-items: center;
    justify-content: space-between;
    padding: 0 12px 0 16px;
    color: var(--bright);
}

.font-row {
    display: flex;
    align-items: flex-start;
    height: 72px;
    margin: 0 8px 0 6px;
    padding-top: 10px;
    border-bottom: 1px solid #333;
}

.font-selects {
    display: flex;
    flex-direction: column;
    gap: 6px;
    width: 153px;
}

.split {
    background: linear-gradient(90deg, var(--gap) 129px, #303030 129px 130px, #1d1d1d 130px);
}

.picker {
    display: flex;
    flex-direction: column;
    align-items: center;
    gap: 7px;
    width: 25px;
    margin: 5px 6px 0;
}

.fields {
    display: grid;
    grid-template-columns: 31px 56px 46px 38px 58px 8px;
    align-items: center;
    height: 62px;
    margin: 0 8px 0 6px;
    padding: 1px 0 7px;
    border-bottom: 1px solid #333;
}

.ch {
    width: 24px;
    height: 22px;
    overflow: visible;
}

.val {
    white-space: nowrap;
}

.val b {
    font-weight: 400;
    color: var(--blue);
}

.val.dim {
    color: #444;
}

.arr {
    width: 8px;
    height: 8px;
    color: #9a9a9a;
}

.stroke-row {
    display: grid;
    grid-template-columns: 31px 56px 14px 1fr;
    align-items: center;
    height: 39px;
    margin: 0 8px 0 6px;
    border-bottom: 1px solid #333;
}

.g-serif {
    font-family: 'DejaVu Serif', serif;
    font-weight: 700;
    fill: #b0b0b0;
}

.g-sans {
    font-family: 'Open Sans', sans-serif;
    fill: #b0b0b0;
}

.g-cjk {
    font-family: 'Noto Sans CJK JP', sans-serif;
    fill: #b0b0b0;
}

.faux {
    display: flex;
    gap: 12px;
    padding: 10px 0 0 38px;
    font-family: 'DejaVu Serif', serif;
    font-size: 17px;
    line-height: 22px;
    color: #b0b0b0;
}

.faux button {
    width: 18px;
    height: 22px;
    white-space: nowrap;
}

.faux .wide {
    width: 24px;
    margin-right: -4px;
}

.faux .italic + .wide {
    margin-left: 4px;
}

.faux button:nth-child(5) {
    margin-left: 10px;
}

.faux .bold { font-weight: 700; }
.faux .italic { font-style: italic; }
.faux small { font-size: 13px; }
.faux sup, .faux sub { font-size: 10px; line-height: 1px; }

/* Timeline */
.timeline {
    flex: 1;
    display: flex;
    flex-direction: column;
    margin: 6px 2px 0 1px;
    background: var(--panel);
}

.comps {
    height: 38px;
    padding-left: 32px;
}

.comps a:nth-child(1) { width: 163px; }
.comps a:nth-child(2) { width: 220px; }
.comps a:nth-child(3) { width: 187px; }
.comps a:nth-child(4) { width: 142px; }

.comps a.active svg {
    margin-left: 15px;
}

.time-body {
    flex: 1;
    display: flex;
}

.layers {
    width: 702px;
}

.time-head {
    display: flex;
    align-items: center;
    height: 42px;
    padding: 0 17px 4px 15px;
}

.timecode {
    width: 111px;
}

.timecode strong {
    display: block;
    font-size: 19px;
    line-height: 20px;
    font-weight: 700;
    color: var(--blue);
}

.timecode span {
    display: block;
    line-height: 18px;
    color: #1f5b96;
}

.time-head .search {
    width: 368px;
    padding-left: 8px;
}

.switches {
    flex: 1;
    display: flex;
    gap: 13px;
    padding-left: 19px;
}

.switches svg:nth-child(2) { margin-left: 7px; }
.switches svg:last-child { margin-left: 7px; }

.layer-cols {
    display: flex;
    height: 25px;
    border-top: 1px solid #000;
    border-bottom: 1px solid #000;
    background: #262626;
    font-size: 11px;
    line-height: 24px;
    color: #a8a8a8;
}

.layer-cols span {
    padding-left: 7px;
    background: linear-gradient(#111, #111) right center / 1px 16px no-repeat;
}

.layer-cols .av {
    display: flex;
    align-items: center;
    gap: 6px;
    width: 87px;
    padding-left: 8px;
}

.layer-cols .tag {
    width: 39px;
    padding: 4px 0 0 16px;
}

.layer-cols .num { width: 41px; }
.layer-cols .source { width: 162px; }
.layer-cols .mode { width: 94px; background: none; }
.layer-cols .t { width: 21px; background: none; }
.layer-cols .trk { width: 93px; }
.layer-cols .parent { width: 147px; }

.graph {
    flex: 1;
    position: relative;
    display: flex;
    flex-direction: column;
    padding-top: 4px;
    border-left: 1px solid #000;
}

.nav-range, .work-area {
    display: flex;
    height: 12px;
    border-bottom: 1px solid #0c0c0c;
}

.work-area {
    height: 20px;
}

.bar {
    flex: 1;
    background: #666;
}

.work-area .bar {
    background: #606060;
}

.cap-l, .cap-r {
    width: 8px;
    margin-left: 1px;
    background: var(--blue);
    border-radius: 5px 0 0 5px;
}

.cap-r {
    border-radius: 0 5px 5px 0;
}

.ruler {
    display: flex;
    justify-content: space-between;
    height: 25px;
    padding: 1px 0 0 5px;
    overflow: hidden;
    border-bottom: 1px solid #0c0c0c;
    font-size: 12px;
}

.ruler span:last-child {
    width: 27px;
    overflow: hidden;
}

.cached {
    height: 5px;
    padding: 0 9px;
    border-bottom: 1px solid #0c0c0c;
}

.cached i {
    display: block;
    height: 4px;
    background: #18b92a;
}

.tracks {
    flex: 1;
    margin: 0 9px 2px;
    background: #4b4b4b;
}

.playhead {
    position: absolute;
    left: 2px;
    top: 22px;
    bottom: 1px;
    width: 15px;
    background: linear-gradient(var(--blue), var(--blue)) center / 1px 100% no-repeat;
}

.gutter {
    width: 21px;
    padding: 43px 0 0 5px;
}

.gutter svg + svg {
    margin: 8px 0 0 -3px;
}

.status {
    display: flex;
    align-items: center;
    height: 23px;
    border-top: 1px solid #000;
    background: linear-gradient(#555, #555) 44px 100% / 323px 1px no-repeat, linear-gradient(#555, #555) 738px 100% / 45px 1px no-repeat;
}

.status-left {
    display: flex;
    align-items: center;
    gap: 9px;
    width: 331px;
    padding-left: 10px;
}

.status-left b {
    color: #6fdcae;
}

.toggle {
    width: 205px;
    height: 20px;
    background: #1f1f1f;
    border: 1px solid #2b2b2b;
    border-radius: 3px;
}

.zoomer {
    display: flex;
    align-items: center;
    gap: 15px;
    margin-left: 174px;
}

.zoomer input {
    appearance: none;
    width: 60px;
    height: 3px;
    background: #484848;
}

.zoomer input::-webkit-slider-thumb {
    appearance: none;
    width: 12px;
    height: 12px;
    border: 2px solid #a0a0a0;
    border-radius: 50%;
    background: var(--panel);
}

/* Script alert */
.alert {
    position: absolute;
    left: 723px;
    top: 464px;
    width: 492px;
    background: #fff;
    box-shadow: 0 3px 14px rgba(0, 0, 0, 0.6);
    color: #111;
}

.alert-head {
    display: flex;
    justify-content: space-between;
    align-items: center;
    height: 38px;
    padding: 0 15px 0 9px;
    font-size: 14px;
}

.alert-body {
    display: flex;
    gap: 11px;
    height: 122px;
    padding: 33px 29px;
    line-height: 19px;
}

.alert-foot {
    display: flex;
    justify-content: flex-end;
    height: 62px;
    padding: 16px 23px;
    background: #efefef;
}

.alert-foot button {
    width: 98px;
    height: 31px;
    background: #e1e1e1;
    border: 2px solid #1174c8;
}
```
